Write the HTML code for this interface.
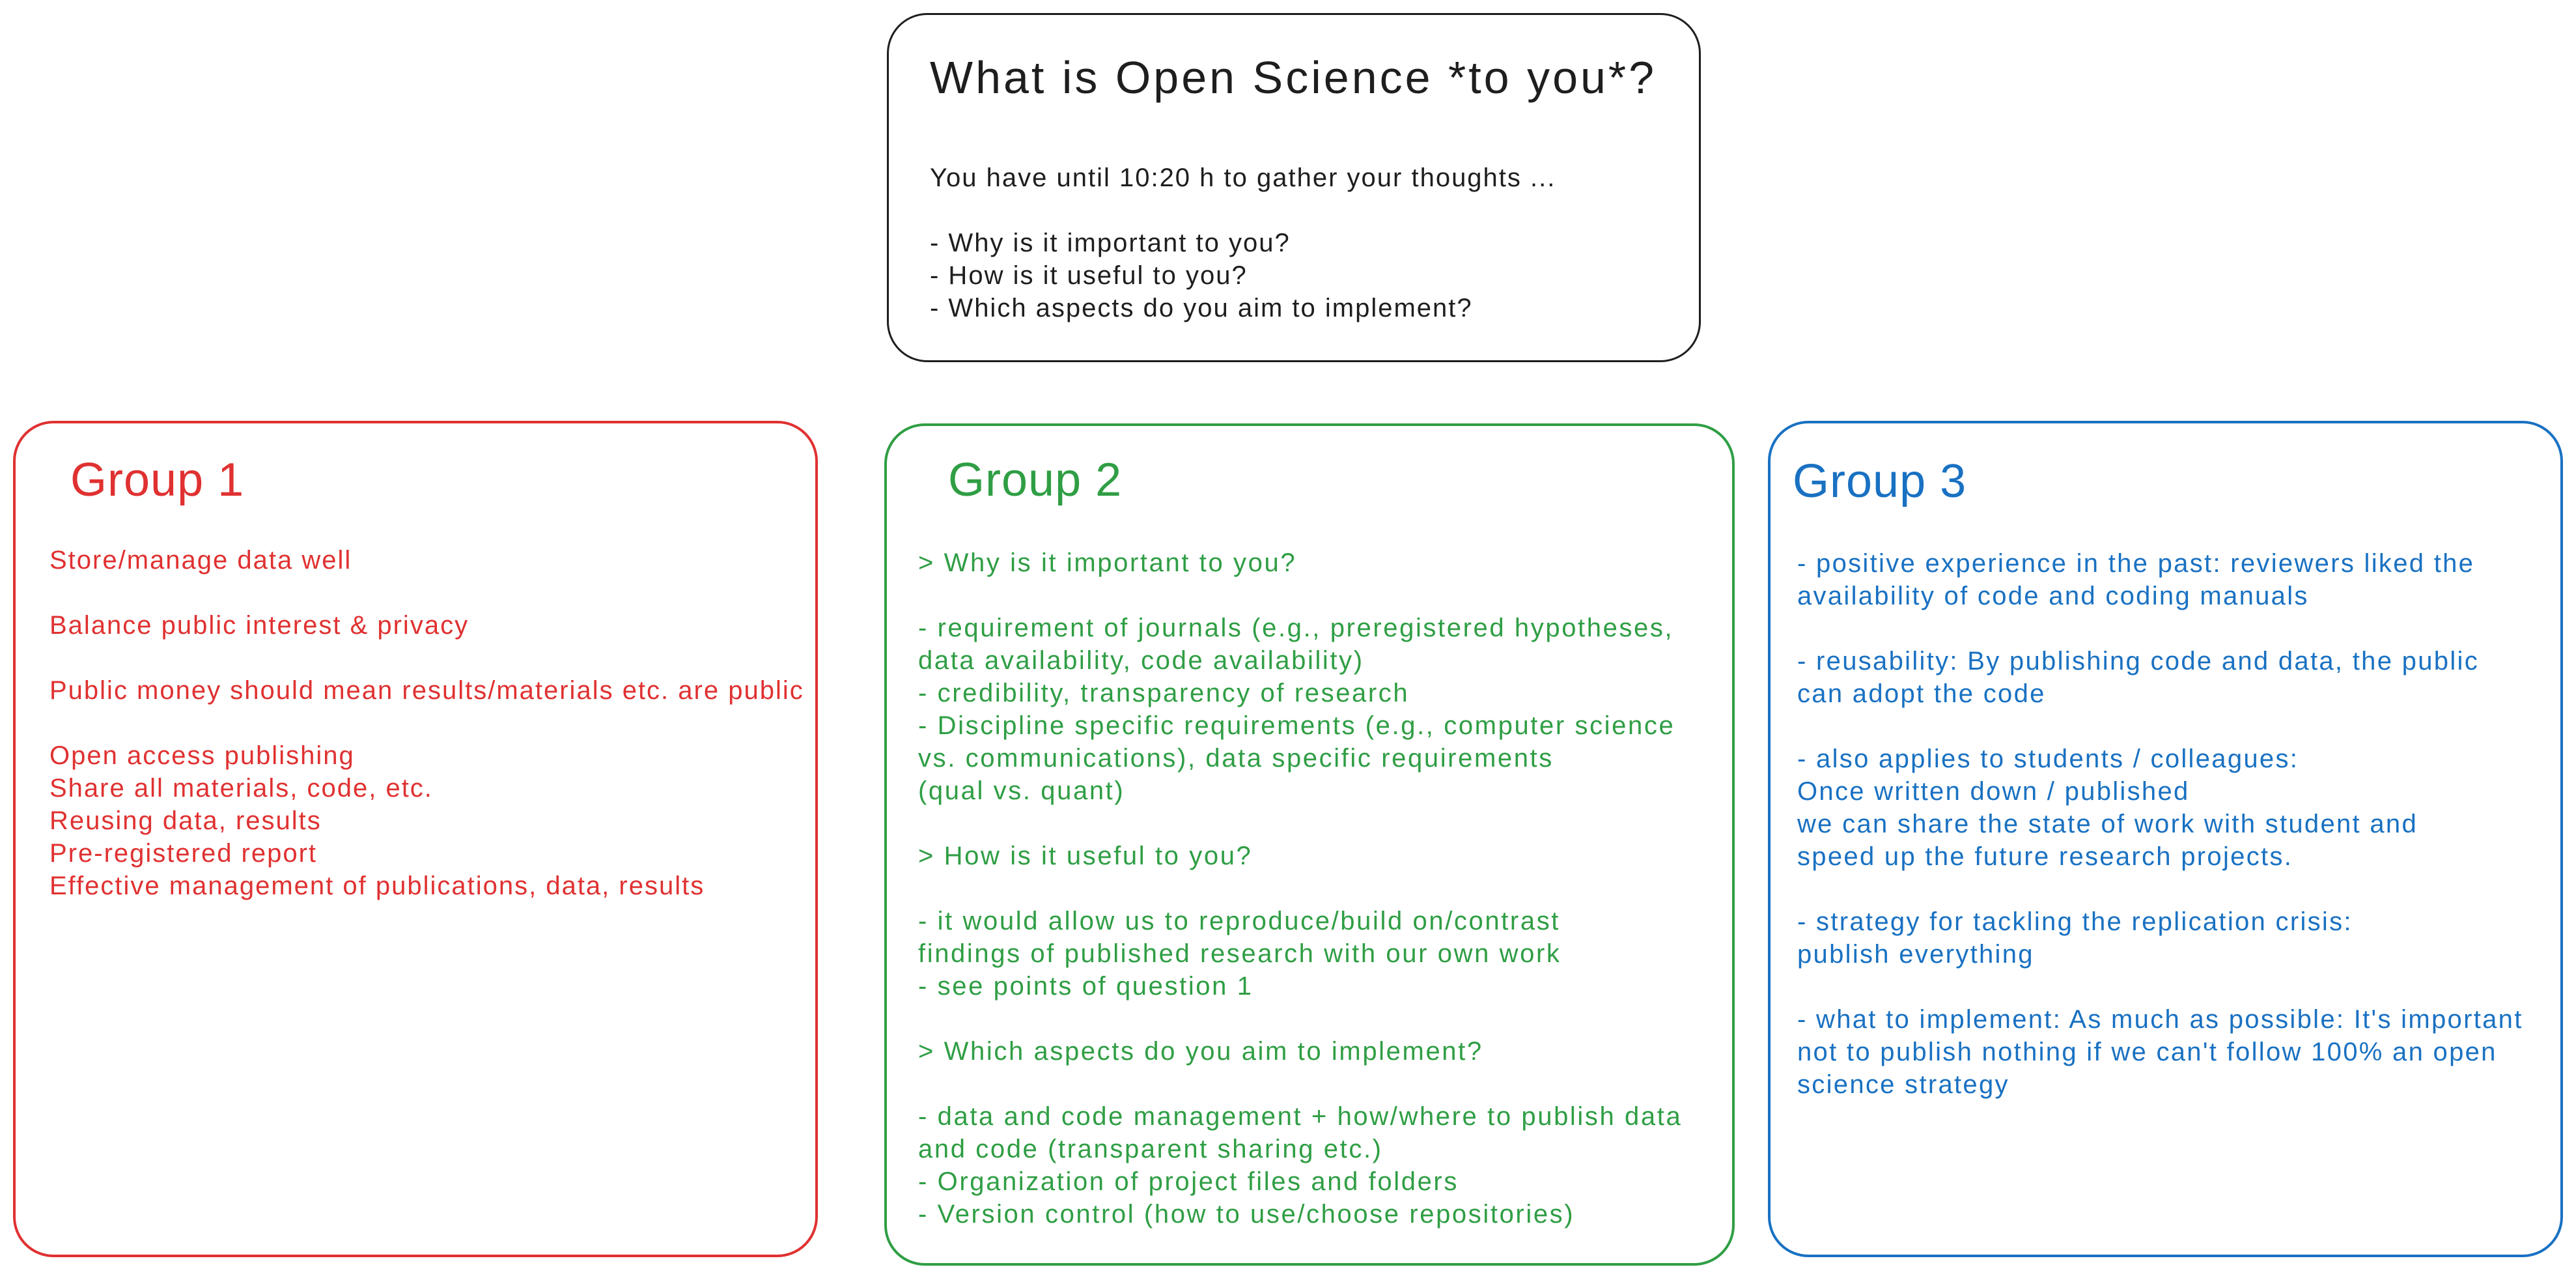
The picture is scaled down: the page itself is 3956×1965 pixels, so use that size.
<!DOCTYPE html>
<html><head><meta charset="utf-8">
<style>
html,body{margin:0;padding:0;background:#fff;}
body{width:3956px;height:1965px;position:relative;overflow:hidden;font-family:"Liberation Sans",sans-serif;}
.box{position:absolute;border:4px solid;border-radius:62px;box-sizing:border-box;}
.t{position:absolute;white-space:pre;font-size:40px;line-height:50px;letter-spacing:2.3px;}
.h{position:absolute;white-space:pre;font-size:72px;line-height:80px;letter-spacing:1px;}
</style></head><body>
<div class="box" style="left:1362px;top:20px;width:1250px;height:536px;border-color:#1e1e1e;border-width:3px;"></div>
<div class="h" style="left:1428px;top:79px;font-size:70px;letter-spacing:4px;color:#1e1e1e;">What is Open Science *to you*?</div>
<div class="t" style="left:1428px;top:248px;color:#1e1e1e;letter-spacing:2px;">You have until 10:20 h to gather your thoughts ...

- Why is it important to you?
- How is it useful to you?
- Which aspects do you aim to implement?</div>

<div class="box" style="left:20px;top:646px;width:1236px;height:1284px;border-color:#e03131;"></div>
<div class="h" style="left:108px;top:697px;color:#e03131;">Group 1</div>
<div class="t" style="left:76px;top:835px;color:#e03131;letter-spacing:2px;">Store/manage data well

Balance public interest &amp; privacy

Public money should mean results/materials etc. are public

Open access publishing
Share all materials, code, etc.
Reusing data, results
Pre-registered report
Effective management of publications, data, results</div>

<div class="box" style="left:1358px;top:650px;width:1306px;height:1293px;border-color:#2f9e44;"></div>
<div class="h" style="left:1456px;top:697px;color:#2f9e44;">Group 2</div>
<div class="t" style="left:1410px;top:839px;color:#2f9e44;letter-spacing:2.6px;">&gt; Why is it important to you?

- requirement of journals (e.g., preregistered hypotheses,
data availability, code availability)
- credibility, transparency of research
- Discipline specific requirements (e.g., computer science
vs. communications), data specific requirements
(qual vs. quant)

&gt; How is it useful to you?

- it would allow us to reproduce/build on/contrast
findings of published research with our own work
- see points of question 1

&gt; Which aspects do you aim to implement?

- data and code management + how/where to publish data
and code (transparent sharing etc.)
- Organization of project files and folders
- Version control (how to use/choose repositories)</div>

<div class="box" style="left:2715px;top:646px;width:1221px;height:1284px;border-color:#1971c2;"></div>
<div class="h" style="left:2753px;top:699px;color:#1971c2;">Group 3</div>
<div class="t" style="left:2760px;top:840px;color:#1971c2;">- positive experience in the past: reviewers liked the
availability of code and coding manuals

- reusability: By publishing code and data, the public
can adopt the code

- also applies to students / colleagues:
Once written down / published
we can share the state of work with student and
speed up the future research projects.

- strategy for tackling the replication crisis:
publish everything

- what to implement: As much as possible: It's important
not to publish nothing if we can't follow 100% an open
science strategy</div>
</body></html>
